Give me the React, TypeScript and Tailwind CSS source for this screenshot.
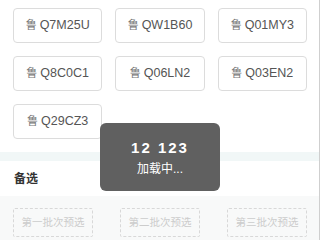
import React from 'react';

const plates = ['Q7M25U', 'QW1B60', 'Q01MY3', 'Q8C0C1', 'Q06LN2', 'Q03EN2', 'Q29CZ3'];
const batches = ['第一批次预选', '第二批次预选', '第三批次预选'];

const font = { fontFamily: '"Liberation Sans", "Noto Sans CJK SC", sans-serif' };

export default function App() {
  return (
    <div className="relative w-[320px] h-[240px] overflow-hidden bg-white border-r border-[#cfcfcf]" style={font}>
      {/* Plates */}
      <div className="grid grid-cols-3 gap-[13px] pl-[13px] pr-[12px] pt-[8px] pb-[13px]">
        {plates.map(p => (
          <div
            key={p}
            className="h-[35px] flex items-center justify-center gap-[3px] rounded-[4px] border border-[#dcdcdc] text-[12.5px] text-[#555]"
          >
            <span className="text-[11px] text-[#777]">鲁</span>
            <span>{p}</span>
          </div>
        ))}
      </div>

      {/* Divider band */}
      <div className="h-[9px] bg-[#f1f7f7]" />

      {/* Section header */}
      <div className="h-[35px] flex items-center px-[14px] text-[12px] font-bold text-[#333]">备选</div>

      {/* Candidate batches */}
      <div className="bg-[#f8f9f9] pt-[12px] pl-[13px] pr-[12px] h-[60px] flex justify-between">
        {batches.map(b => (
          <div
            key={b}
            className="w-[80px] h-[29px] flex items-center justify-center border border-dashed border-[#d8d8d8] rounded-[2px] text-[10.5px] text-[#cccccc]"
          >
            {b}
          </div>
        ))}
      </div>

      {/* Loading toast */}
      <div className="absolute left-[100px] top-[123px] w-[120px] h-[68px] rounded-[6px] bg-[#606060] flex flex-col items-center justify-center text-white">
        <div className="text-[15px] font-black leading-none tracking-[2px]">12 123</div>
        <div className="mt-[8px] text-[12px] leading-none">加载中...</div>
      </div>
    </div>
  );
}
